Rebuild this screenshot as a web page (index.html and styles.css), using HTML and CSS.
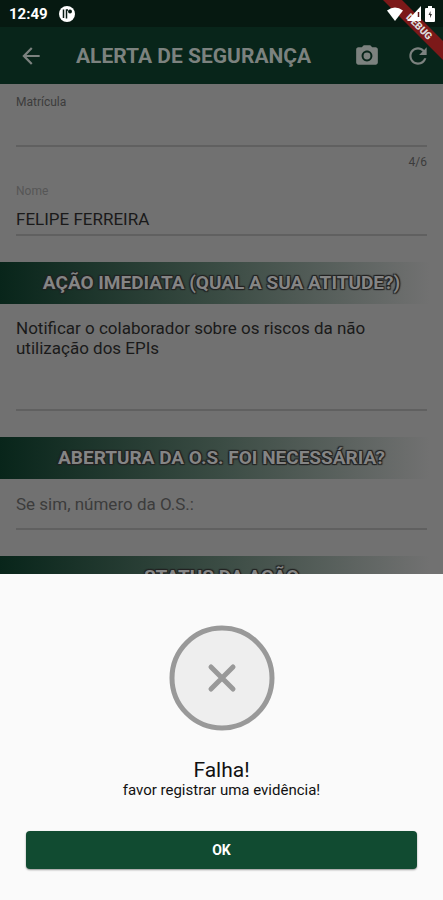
FILE: index.html
```html
<!DOCTYPE html>
<html lang="pt-BR">
<head>
<meta charset="utf-8">
<meta name="viewport" content="width=device-width, initial-scale=1">
<title>Alerta de Segurança</title>
<link rel="stylesheet" href="styles.css">
</head>
<body>
<div class="screen">
  <div class="status-bar">
    <span class="clock">12:49</span>
    <svg class="status-app" viewBox="0 0 16 16" aria-hidden="true">
      <circle cx="8" cy="8" r="8" fill="#fff"/>
      <path d="M4.500 3.500V12M7.500 12.500V4H9" fill="none" stroke="#061911" stroke-width="1.500"/>
      <circle cx="11" cy="5.500" r="2" fill="#061911"/>
    </svg>
    <div class="status-icons">
      <svg width="16" height="14" viewBox="0 0 16 14" aria-hidden="true"><path d="M0 3.500Q8-2.500 16 3.500L8 14Z" fill="#fff"/></svg>
      <svg width="14" height="15" viewBox="0 0 14 15" aria-hidden="true"><path d="M0 15 14 0V15Z" fill="#fff"/><path d="M11.500 6v5" stroke="#611715" stroke-width="1.500"/></svg>
      <svg width="10" height="16" viewBox="0 0 10 16" aria-hidden="true"><path d="M3 0h4v2h2q1 0 1 1v12q0 1-1 1H1q-1 0-1-1V3q0-1 1-1h2Z" fill="#fff"/><path d="M5.500 5 3.500 9h1.500v3l2-4h-1.500Z" fill="#333"/></svg>
    </div>
  </div>

  <header class="app-bar">
    <button class="icon-button" type="button" aria-label="Voltar">
      <svg width="26" height="26" viewBox="0 0 24 24"><path fill="currentColor" d="M20 11H7.830l5.590-5.590L12 4l-8 8 8 8 1.410-1.410L7.830 13H20v-2z"/></svg>
    </button>
    <h1 class="app-title">ALERTA DE SEGURANÇA</h1>
    <button class="icon-button" type="button" aria-label="Câmera">
      <svg width="26" height="26" viewBox="0 0 24 24"><circle cx="12" cy="12" r="3.200" fill="currentColor"/><path fill="currentColor" d="M9 2 7.170 4H4c-1.100 0-2 .9-2 2v12c0 1.100.9 2 2 2h16c1.100 0 2-.9 2-2V6c0-1.100-.9-2-2-2h-3.170L15 2H9zm3 15c-2.760 0-5-2.240-5-5s2.240-5 5-5 5 2.240 5 5-2.240 5-5 5z"/></svg>
    </button>
    <button class="icon-button" type="button" aria-label="Atualizar">
      <svg width="26" height="26" viewBox="0 0 24 24"><path fill="currentColor" d="M17.650 6.350C16.200 4.900 14.210 4 12 4c-4.420 0-7.990 3.580-7.990 8s3.570 8 7.990 8c3.730 0 6.840-2.550 7.730-6h-2.080c-.82 2.330-3.040 4-5.650 4-3.310 0-6-2.690-6-6s2.690-6 6-6c1.660 0 3.140.69 4.220 1.780L13 11h7V4l-2.350 2.350z"/></svg>
    </button>
  </header>

  <form class="form">
    <div class="field">
      <label class="label label-dark" for="matricula">Matrícula</label>
      <input class="input" id="matricula" type="text">
    </div>
    <p class="counter">4/6</p>
    <div class="field">
      <label class="label" for="nome">Nome</label>
      <input class="input" id="nome" type="text" value="FELIPE FERREIRA">
    </div>
    <h2 class="band">AÇÃO IMEDIATA (QUAL A SUA ATITUDE?)</h2>
    <div class="field">
      <textarea class="input area" aria-label="Ação imediata">Notificar o colaborador sobre os riscos da não utilização dos EPIs</textarea>
    </div>
    <h2 class="band">ABERTURA DA O.S. FOI NECESSÁRIA?</h2>
    <div class="field">
      <input class="input order" type="text" placeholder="Se sim, número da O.S.:" aria-label="Se sim, número da O.S.:">
    </div>
    <h2 class="band">STATUS DA AÇÃO</h2>
  </form>

  <svg class="ribbon" viewBox="0 0 64 64" aria-hidden="true">
    <path d="M4 0H23L64 41V60Z" fill="#7c1919"/>
    <text class="ribbon-text" transform="translate(40 27) rotate(45)" text-anchor="middle" y="3">DEBUG</text>
  </svg>

  <section class="sheet" role="dialog" aria-labelledby="sheet-title">
    <svg class="sheet-icon" viewBox="0 0 106 106" aria-hidden="true">
      <circle cx="53" cy="53" r="50" fill="#eee" stroke="#999" stroke-width="5"/>
      <path d="M42 42 64 64M64 42 42 64" stroke="#999" stroke-width="5" stroke-linecap="round"/>
    </svg>
    <h2 class="sheet-title" id="sheet-title">Falha!</h2>
    <p class="sheet-text">favor registrar uma evidência!</p>
    <button class="ok" type="button">OK</button>
  </section>
</div>
</body>
</html>
```
FILE: styles.css
```css
* {
  box-sizing: border-box;
}

body,
h1,
h2,
p {
  margin: 0;
}

body {
  background: #717171;
  font-family: Roboto, "Liberation Sans", sans-serif;
}

.screen {
  position: relative;
  height: 100vh;
  overflow: hidden;
}

.status-bar {
  display: flex;
  align-items: center;
  gap: 11px;
  height: 27px;
  padding: 0 8px 0 9px;
  background: #061911;
  color: #fff;
}

.clock {
  font-size: 15px;
  font-weight: 700;
}

.status-app {
  width: 16px;
  height: 16px;
}

.status-icons {
  position: relative;
  z-index: 1;
  display: flex;
  align-items: center;
  gap: 4px;
  margin-left: auto;
}

.app-bar {
  display: flex;
  align-items: center;
  height: 57px;
  padding-left: 5px;
  background: #08251a;
  color: #7c827f;
}

.icon-button {
  display: grid;
  place-items: center;
  width: 51px;
  height: 51px;
  padding: 0;
  border: 0;
  background: none;
  color: inherit;
}

.app-title {
  flex: 1;
  padding-left: 20px;
  font-size: 21px;
  font-weight: 700;
  white-space: nowrap;
}

.field {
  padding: 0 16px;
}

.label {
  display: block;
  padding-top: 10px;
  color: #565656;
  font-size: 12px;
  line-height: 16px;
}

.label-dark {
  color: #3c3c3c;
}

.input {
  display: block;
  width: 100%;
  height: 37px;
  padding: 4px 0 0;
  border: 0;
  border-bottom: 2px solid #606060;
  border-radius: 0;
  outline: 0;
  background: none;
  color: #1a1a1a;
  font: 17px/20px Roboto, "Liberation Sans", sans-serif;
  resize: none;
}

.input::placeholder {
  color: #3c3c3c;
  opacity: 1;
}

.area {
  height: 107px;
  padding-top: 14px;
  overflow: hidden;
}

.order {
  height: 51px;
  padding-top: 0;
}

.counter {
  padding: 7px 16px 3px;
  color: #3c3c3c;
  font-size: 12px;
  line-height: 16px;
  text-align: right;
}

.band {
  height: 42px;
  margin-top: 26px;
  background: linear-gradient(90deg, #08251a, #3b4c44 50%, #717171 97%);
  color: #858585;
  font-size: 19px;
  font-weight: 700;
  line-height: 42px;
  text-align: center;
  text-shadow: 1px 1px 1px #222, -1px -1px 1px #222, 1px -1px 1px #222, -1px 1px 1px #222;
}

.ribbon {
  position: absolute;
  top: 0;
  right: 0;
  width: 64px;
  height: 64px;
}

.ribbon-text {
  fill: #ddd;
  font-size: 10px;
  font-weight: 900;
}

.sheet {
  position: absolute;
  right: 0;
  bottom: 0;
  left: 0;
  display: flex;
  flex-direction: column;
  align-items: center;
  padding: 51px 26px 31px;
  background: #fafafa;
  color: #111;
}

.sheet-icon {
  width: 106px;
  height: 106px;
}

.sheet-title {
  margin-top: 28px;
  font-size: 21px;
  font-weight: 400;
  line-height: 22px;
}

.sheet-text {
  font-size: 15px;
  line-height: 18px;
}

.ok {
  width: 100%;
  height: 38px;
  margin-top: 32px;
  border: 0;
  border-radius: 4px;
  background: #114b31;
  box-shadow: 0 1px 2px #0006;
  color: #fff;
  font: 700 14px/20px Roboto, "Liberation Sans", sans-serif;
}
```
